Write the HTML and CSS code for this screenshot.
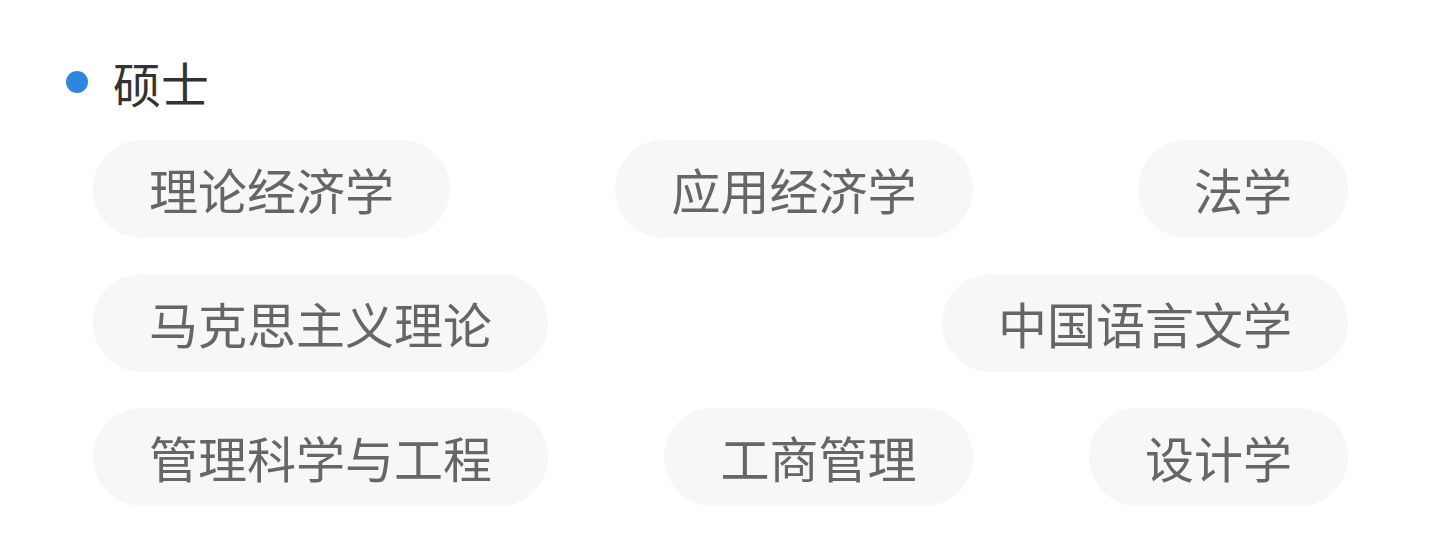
FILE: index.html
```html
<!DOCTYPE html>
<html lang="zh-CN">
<head>
    <meta charset="UTF-8">
    <meta name="viewport" content="width=device-width, initial-scale=1.0">
    <title>专业列表</title>
    <link rel="stylesheet" href="styles.css">
</head>
<body>

    <div class="degree">
        <!-- Degree heading -->
        <div class="degree-title">
            <span class="dot"></span>
            <span>硕士</span>
        </div>

        <!-- Major tags -->
        <div class="majors">
            <span class="major">理论经济学</span>
            <span class="major">应用经济学</span>
            <span class="major">法学</span>
            <span class="major">马克思主义理论</span>
            <span class="major">中国语言文学</span>
            <span class="major">管理科学与工程</span>
            <span class="major">工商管理</span>
            <span class="major">设计学</span>
        </div>
    </div>

</body>
</html>
```

FILE: styles.css
```css
/* General styles */
body {
    margin: 0;
    padding: 0;
    background-color: #fff;
    font-family: "Noto Sans CJK SC", "Noto Sans", sans-serif;
}

.degree {
    padding: 54px 87px 0 66px;
}

.degree-title {
    display: flex;
    align-items: center;
    font-size: 48px;
    line-height: 56px;
    color: #333;
}

.dot {
    width: 22px;
    height: 22px;
    border-radius: 50%;
    background-color: #2f86e0;
    margin-right: 25px;
}

.majors {
    display: flex;
    flex-wrap: wrap;
    justify-content: space-between;
    row-gap: 36px;
    column-gap: 20px;
    margin: 30px 0 0 27px;
}

.major {
    height: 98px;
    line-height: 98px;
    padding: 0 56px;
    border-radius: 49px;
    background-color: #f7f7f7;
    color: #666;
    font-size: 49px;
}
```
